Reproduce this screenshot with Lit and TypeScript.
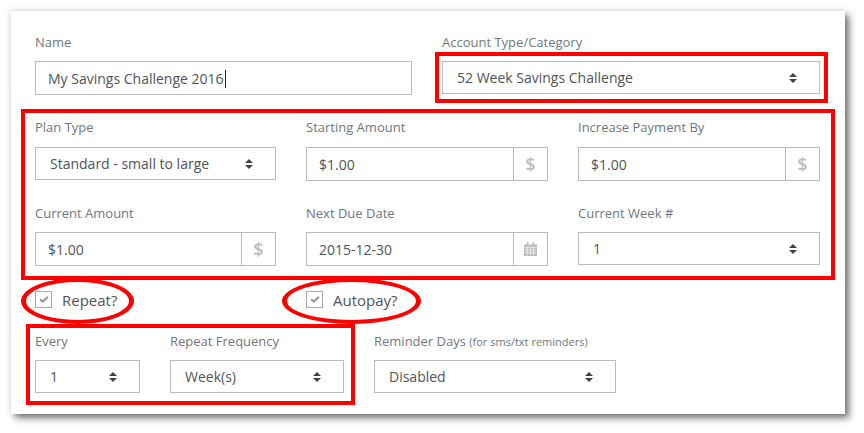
import { LitElement, html, css, svg } from "lit";
import { customElement } from "lit/decorators.js";

const sortIcon = html`<svg class="sort" viewBox="0 0 8 10" width="8" height="10" aria-hidden="true">
  <path d="M4 0 L8 4 H0 Z M0 6 H8 L4 10 Z" fill="#3d4348"></path>
</svg>`;

const calendarIcon = html`<svg class="cal" viewBox="0 0 13 14" width="13" height="14" aria-hidden="true">
  ${svg`<path fill="#bcbcbc" d="M0 2.5h2.6V1a1 1 0 0 1 2 0v1.5h3.8V1a1 1 0 0 1 2 0v1.5H13V14H0Z"></path>
  <path stroke="#f2f2f2" stroke-width=".8" fill="none" d="M.8 5.2h11.4M.8 8h11.4M.8 10.8h11.4M3.3 5v8.4M6.5 5v8.4M9.7 5v8.4"></path>`}
</svg>`;

const checkIcon = html`<svg viewBox="0 0 11 8" width="10" height="7" aria-hidden="true">
  <path d="M1 3.6 L4 6.4 L10 1" fill="none" stroke="#9a9a9a" stroke-width="2.4"></path>
</svg>`;

@customElement("app-root")
export class AppRoot extends LitElement {
  static styles = css`
    :host {
      display: block;
      position: relative;
      width: 864px;
      height: 433px;
      overflow: hidden;
      background: #fff;
      font-family: "Open Sans", "Noto Sans", sans-serif;
      font-size: 14px;
      color: #4f5459;
    }
    .card {
      position: relative;
      box-sizing: border-box;
      margin: 11px 0 0 11px;
      width: 834px;
      height: 403px;
      padding: 21px 25px 0 24px;
      background: #fff;
      box-shadow: 4px 4px 7px rgba(0, 0, 0, 0.55), -1px -1px 6px rgba(0, 0, 0, 0.1);
    }
    .row {
      display: grid;
      column-gap: 30px;
      align-items: start;
    }
    .two { grid-template-columns: 377px 378px; }
    .three { grid-template-columns: 241px 242px 242px; }
    .freq { grid-template-columns: 105px 174px 242px; margin-top: 23px; }
    .plan { margin-top: 22px; }
    .plan .label { margin-bottom: 10px; }
    .current { margin-top: 22px; }
    .label {
      display: block;
      height: 20px;
      line-height: 20px;
      margin-bottom: 9px;
      font-size: 13px;
      color: #70767c;
      white-space: nowrap;
    }
    .label small { font-size: 11px; }
    .control {
      box-sizing: border-box;
      display: flex;
      align-items: center;
      height: 34px;
      background: #fff;
      border: 1px solid #bbbbbb;
      white-space: nowrap;
    }
    .select { height: 33px; padding: 0 22px 0 14px; justify-content: space-between; }
    .input { padding-left: 12px; }
    .value { flex: 1; min-width: 0; }
    .caret {
      display: inline-block;
      width: 1px;
      height: 18px;
      margin-left: 1px;
      background: #222;
      vertical-align: -4px;
    }
    .addon {
      box-sizing: border-box;
      flex: none;
      width: 34px;
      height: 100%;
      display: flex;
      align-items: center;
      justify-content: center;
      border-left: 1px solid #bbbbbb;
      color: #bcbcbc;
      font-size: 18px;
      font-weight: 600;
    }
    .sort, .cal { display: block; flex: none; }
    .checks {
      display: grid;
      grid-template-columns: 241px 242px;
      column-gap: 30px;
      margin-top: 25px;
    }
    .check {
      display: flex;
      align-items: center;
      height: 17px;
      gap: 10px;
      font-size: 15px;
      color: #4f5459;
    }
    .box {
      box-sizing: border-box;
      width: 17px;
      height: 17px;
      border: 1px solid #a8a8a8;
      display: flex;
      align-items: center;
      justify-content: center;
    }
    .mark {
      position: absolute;
      box-sizing: border-box;
      border: 4px solid #ff0000;
      pointer-events: none;
    }
    .m-account { left: 424px; top: 41px; width: 393px; height: 51px; }
    .m-plan { left: 10px; top: 98px; width: 814px; height: 171px; }
    .m-freq { left: 15px; top: 313px; width: 329px; height: 81px; }
    .m-repeat { left: 10px; top: 267px; width: 113px; height: 46px; border-radius: 50%; border-width: 4px 5px; }
    .m-autopay { left: 271px; top: 267px; width: 139px; height: 46px; border-radius: 50%; border-width: 4px 5px; }
  `;

  private select(label: unknown, value: string) {
    return html`<div>
      <span class="label">${label}</span>
      <div class="control select"><span class="value">${value}</span>${sortIcon}</div>
    </div>`;
  }

  private money(label: string, value: string) {
    return html`<div>
      <span class="label">${label}</span>
      <div class="control input"><span class="value">${value}</span><span class="addon">$</span></div>
    </div>`;
  }

  render() {
    return html`<div class="card">
      <div class="row two">
        <div>
          <span class="label">Name</span>
          <div class="control input"><span class="value">My Savings Challenge 2016<span class="caret"></span></span></div>
        </div>
        ${this.select("Account Type/Category", "52 Week Savings Challenge")}
      </div>
      <div class="row three plan">
        ${this.select("Plan Type", "Standard - small to large")}
        ${this.money("Starting Amount", "$1.00")}
        ${this.money("Increase Payment By", "$1.00")}
      </div>
      <div class="row three current">
        ${this.money("Current Amount", "$1.00")}
        <div>
          <span class="label">Next Due Date</span>
          <div class="control input"><span class="value">2015-12-30</span><span class="addon">${calendarIcon}</span></div>
        </div>
        ${this.select("Current Week #", "1")}
      </div>
      <div class="checks">
        <div class="check"><span class="box">${checkIcon}</span>Repeat?</div>
        <div class="check"><span class="box">${checkIcon}</span>Autopay?</div>
      </div>
      <div class="row freq">
        ${this.select("Every", "1")}
        ${this.select("Repeat Frequency", "Week(s)")}
        ${this.select(html`Reminder Days <small>(for sms/txt reminders)</small>`, "Disabled")}
      </div>
      <div class="mark m-account"></div>
      <div class="mark m-plan"></div>
      <div class="mark m-freq"></div>
      <div class="mark m-repeat"></div>
      <div class="mark m-autopay"></div>
    </div>`;
  }
}
